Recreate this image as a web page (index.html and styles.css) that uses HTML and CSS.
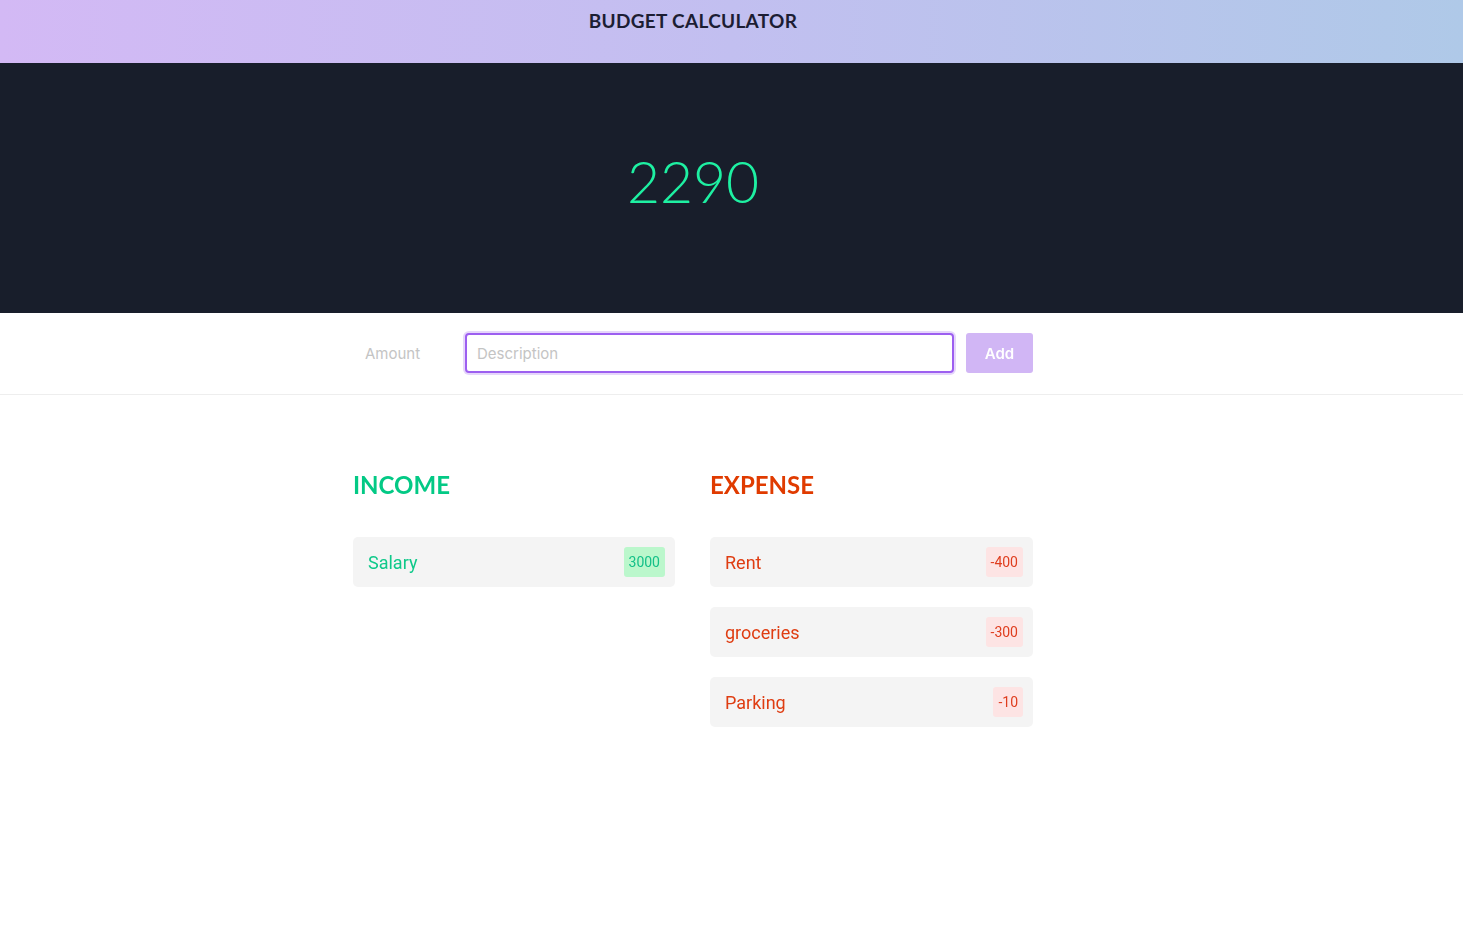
FILE: index.html
```html
<!DOCTYPE html>
<html lang="en">
<head>
<meta charset="utf-8">
<title>Budget Calculator</title>
<link rel="stylesheet" href="styles.css">
</head>
<body>
  <header class="topbar">
    <div class="inner"><h1 class="title">BUDGET CALCULATOR</h1></div>
  </header>
  <section class="balance">
    <div class="inner"><div class="total">2290</div></div>
  </section>
  <section class="form-row">
    <div class="inner">
      <form class="entry">
        <input class="amount" type="text" placeholder="Amount">
        <input class="desc" type="text" placeholder="Description" autofocus>
        <button class="add" type="button">Add</button>
      </form>
    </div>
  </section>
  <main class="lists">
    <div class="inner cols">
      <section class="col">
        <h2 class="heading income">INCOME</h2>
        <ul class="items">
          <li class="item inc"><span>Salary</span><span class="badge">3000</span></li>
        </ul>
      </section>
      <section class="col">
        <h2 class="heading expense">EXPENSE</h2>
        <ul class="items">
          <li class="item exp"><span>Rent</span><span class="badge">-400</span></li>
          <li class="item exp"><span>groceries</span><span class="badge">-300</span></li>
          <li class="item exp"><span>Parking</span><span class="badge">-10</span></li>
        </ul>
      </section>
    </div>
  </main>
</body>
</html>
```
FILE: styles.css
```css
* { box-sizing: border-box; }
html, body { margin: 0; padding: 0; background: #fff; }
body { font-family: "Lato", "Noto Sans", sans-serif; }

.inner { padding-right: 77px; }

.topbar {
  height: 63px;
  background: linear-gradient(90deg, #d3b9f5 0%, #c2bff0 50%, #afc9e8 100%);
}
.title {
  margin: 0;
  padding-top: 10px;
  text-align: center;
  font-family: "Lato", sans-serif;
  font-weight: 700;
  font-size: 19px;
  line-height: 22px;
  letter-spacing: 0.3px;
  color: #1c1d33;
}

.balance {
  height: 250px;
  background: #181e2b;
}
.balance .inner { height: 100%; display: flex; align-items: center; justify-content: center; padding-bottom: 14px; }
.total {
  font-family: "Lato", sans-serif;
  font-weight: 300;
  font-size: 57px;
  color: #1ef0a2;
  line-height: 1;
}

.form-row {
  border-bottom: 1px solid #eeeeee;
  padding: 20px 0 21px;
}
.entry {
  width: 680px;
  margin: 0 auto;
  display: flex;
  gap: 12px;
  height: 40px;
}
.entry input, .entry button { font-family: "Inter", "Noto Sans", sans-serif; font-size: 15px; }
.amount {
  width: 100px;
  border: none;
  outline: none;
  padding: 0 12px;
  background: transparent;
}
.amount::placeholder { color: #c4c4c4; }
.desc {
  width: 489px;
  border: 2px solid #9d5ff0;
  border-radius: 4px;
  padding: 0 10px;
  outline: none;
  box-shadow: 0 0 0 2px #e6d6fb;
  color: #333;
}
.desc::placeholder { color: #c4c4c4; }
.add {
  width: 67px;
  border: none;
  border-radius: 3px;
  background: #d1b6f5;
  color: #fff;
  font-weight: 600;
  font-size: 15px;
}

.lists { padding-top: 76px; }
.cols {
  display: flex;
  justify-content: center;
  gap: 35px;
}
.col { width: 322px; }
.col + .col { width: 323px; }
.heading {
  margin: 0 0 38px;
  font-family: "Lato", sans-serif;
  font-weight: 700;
  font-size: 24px;
  line-height: 28px;
}
.heading.income { color: #03c985; }
.heading.expense { color: #e03b00; }

.items { list-style: none; margin: 0; padding: 0; display: flex; flex-direction: column; gap: 20px; }
.item {
  height: 50px;
  background: #f4f4f4;
  border-radius: 5px;
  display: flex;
  align-items: center;
  justify-content: space-between;
  padding: 0 10px 0 15px;
  font-family: "Roboto", sans-serif;
  font-size: 18px;
}
.badge {
  height: 30px;
  padding: 0 5px;
  border-radius: 3px;
  display: flex;
  align-items: center;
  font-size: 14px;
}
.item.inc { color: #0fc98a; }
.item.inc .badge { background: #bbf7cc; color: #13c088; }
.item.exp { color: #df3d12; }
.item.exp .badge { background: #fde4e4; color: #df3d1e; }
```
